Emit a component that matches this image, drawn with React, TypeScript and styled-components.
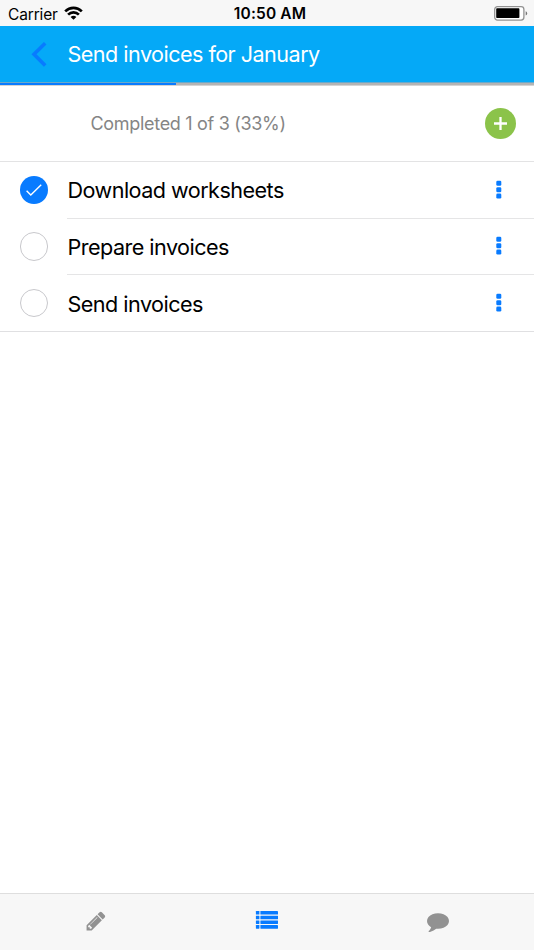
import React from "react";
import styled, { createGlobalStyle } from "styled-components";

const GlobalStyle = createGlobalStyle`
  * { box-sizing: border-box; }
  body { margin: 0; background: #fff; font-family: Inter, "Liberation Sans", sans-serif; }
  svg { display: block; }
`;

const Screen = styled.main`
  display: flex;
  flex-direction: column;
  width: 534px;
  height: 950px;
  overflow: hidden;
  background: #fff;
`;

const StatusBar = styled.div`
  display: grid;
  grid-template-columns: 1fr auto 1fr;
  align-items: center;
  height: 26px;
  padding: 2px 6px 0 8px;
  background: #f7f7f7;
  color: #000;
  font-size: 15.5px;
  line-height: 22px;
`;

const Carrier = styled.div`
  display: flex;
  align-items: center;
  gap: 6.5px;
  padding-top: 1px;
  letter-spacing: -0.15px;

  svg { margin-top: -4px; }
`;

const Clock = styled.div`
  margin: 0 -2px 0 2px;
  font-weight: 600;
  letter-spacing: 0.15px;
`;

const Battery = styled.div`
  display: flex;
  justify-content: flex-end;
  margin-top: -2px;
`;

const Header = styled.header`
  display: flex;
  align-items: center;
  height: 56px;
  background: #05a9f7;
`;

const BackButton = styled.button`
  display: flex;
  align-items: center;
  width: 67.5px;
  height: 56px;
  padding: 0 0 0 31px;
  border: 0;
  background: none;
`;

const Title = styled.h1`
  margin: 0;
  color: #fff;
  font-size: 21.6px;
  font-weight: 400;
  line-height: 30px;
  letter-spacing: -0.54px;
`;

const ProgressTrack = styled.div`
  flex: none;
  height: 4px;
  border-top: 1px solid #6ba9c9;
  border-bottom: 1px solid #d4d4d4;
  background: #b4b4b4;
`;

const ProgressFill = styled.div`
  width: 176px;
  height: 2.4px;
  background: #087bff;
`;

const Summary = styled.section`
  display: flex;
  align-items: center;
  justify-content: space-between;
  height: 76px;
  padding: 0 18px 0 90.5px;
  border-bottom: 1px solid #e3e3e4;
`;

const SummaryText = styled.span`
  color: #858585;
  font-size: 18px;
  line-height: 26px;
  letter-spacing: -0.31px;
`;

const AddButton = styled.button`
  display: grid;
  place-items: center;
  width: 31px;
  height: 31px;
  padding: 0;
  border: 0;
  border-radius: 50%;
  background: #8bc34a;
`;

const TaskList = styled.ul`
  margin: 0;
  padding: 0;
  border-bottom: 1px solid #e0e0e2;
  list-style: none;
`;

const Task = styled.li`
  display: flex;
  height: 56.5px;
  padding-left: 19.5px;

  &:last-child { height: 56px; }
`;

const Check = styled.span<{ $done: boolean }>`
  display: grid;
  place-items: center;
  flex: none;
  width: 28.5px;
  height: 28.5px;
  margin: 13.5px 19px 0 0;
  border: ${(p) => (p.$done ? "0" : "1.5px solid #c8c8cc")};
  border-radius: 50%;
  background: ${(p) => (p.$done ? "#087bff" : "#fff")};
`;

const TaskBody = styled.div<{ $divider: boolean }>`
  display: flex;
  flex: 1;
  align-items: center;
  justify-content: space-between;
  padding: 0 32px 0 0.5px;
  border-bottom: ${(p) => (p.$divider ? "1px solid #e5e5e6" : "0")};
`;

const TaskName = styled.span`
  padding-top: 1px;
  color: #000;
  font-size: 21.6px;
  line-height: 30px;
  letter-spacing: -0.54px;
`;

const TabBar = styled.nav`
  display: flex;
  justify-content: space-between;
  height: 57px;
  margin-top: auto;
  padding: 0 84px;
  border-top: 1px solid #dedede;
  background: #f7f7f7;
`;

const Tab = styled.button<{ $active?: boolean }>`
  display: flex;
  align-items: center;
  justify-content: center;
  width: 24px;
  height: ${(p) => (p.$active ? 52 : 54)}px;
  padding: 0;
  border: 0;
  background: none;
  color: ${(p) => (p.$active ? "#087bff" : "#929292")};
`;

const tasks = [
  { name: "Download worksheets", done: true },
  { name: "Prepare invoices", done: false },
  { name: "Send invoices", done: false },
];

const WifiIcon = () => (
  <svg width="19" height="14" viewBox="0 0 19 14" fill="none" stroke="#000" strokeWidth="2.7">
    <path d="M1.2 5.4C5.9.8 13.1.8 17.8 5.4" />
    <path d="M4.1 8.6c3.1-3 7.7-3 10.8 0" />
    <path d="M6.6 10.9c1.7-1.6 4.1-1.6 5.8 0L9.5 13.7z" fill="#000" stroke="none" />
  </svg>
);

const BatteryIcon = () => (
  <svg width="34" height="15" viewBox="0 0 34 15">
    <rect x=".7" y=".7" width="29.2" height="13.4" rx="2.8" fill="#fff" stroke="#929292" strokeWidth="1.3" />
    <rect x="2.2" y="2.3" width="23.2" height="9.8" rx=".8" fill="#000" />
    <path d="M31.7 5.2q1.5.6 1.5 2.2t-1.5 2.2z" fill="#777" />
  </svg>
);

const DotsIcon = () => (
  <svg width="6" height="20" viewBox="0 0 6 20" fill="#087bff">
    <rect x=".3" y=".8" width="5" height="5" rx="1.3" />
    <rect x=".3" y="7.2" width="5" height="5" rx="1.3" />
    <rect x=".3" y="13.6" width="5" height="5" rx="1.3" />
  </svg>
);

export default function App() {
  return (
    <>
      <GlobalStyle />
      <Screen>
        <StatusBar>
          <Carrier>Carrier<WifiIcon /></Carrier>
          <Clock>10:50 AM</Clock>
          <Battery><BatteryIcon /></Battery>
        </StatusBar>
        <Header>
          <BackButton aria-label="Back">
            <svg width="17" height="27" viewBox="0 0 17 27" fill="none" stroke="#087bff" strokeWidth="3.6">
              <path d="M14.2 2.2 3 13.3l11.2 11.2" />
            </svg>
          </BackButton>
          <Title>Send invoices for January</Title>
        </Header>
        <ProgressTrack><ProgressFill /></ProgressTrack>
        <Summary>
          <SummaryText>Completed 1 of 3 (33%)</SummaryText>
          <AddButton aria-label="Add">
            <svg width="15" height="15" viewBox="0 0 15 15" stroke="#fff" strokeWidth="2.3">
              <path d="M7.5 1v13M1 7.5h13" />
            </svg>
          </AddButton>
        </Summary>
        <TaskList>
          {tasks.map((task, i) => (
            <Task key={task.name}>
              <Check $done={task.done}>
                {task.done && (
                  <svg width="18" height="14" viewBox="0 0 18 14" fill="none" stroke="#fff" strokeWidth="1.4">
                    <path d="m1.6 7.8 4.2 4.3L16.2 1.8" />
                  </svg>
                )}
              </Check>
              <TaskBody $divider={i < tasks.length - 1}>
                <TaskName>{task.name}</TaskName>
                <DotsIcon />
              </TaskBody>
            </Task>
          ))}
        </TaskList>
        <TabBar>
          <Tab aria-label="Edit">
            <svg width="22" height="22" viewBox="0 0 1792 1792" fill="currentColor">
              <path d="M491 1536l91-91-235-235-91 91v107h128v128h107zM1014 608q0-22-22-22-10 0-17 7l-542 542q-7 7-7 17 0 22 22 22 10 0 17-7l542-542q7-7 7-17zM960 416l416 416-832 832h-416v-416zM1643 512q0 53-37 90l-166 166-416-416 166-165q36-38 90-38 53 0 91 38l235 234q37 39 37 91z" />
            </svg>
          </Tab>
          <Tab $active aria-label="Tasks">
            <svg width="24" height="20" viewBox="0 0 24 20" fill="currentColor">
              {[1, 5.7, 10.4, 15.1].map((y) => (
                <g key={y}>
                  <rect x=".9" y={y} width="3.5" height="3.6" rx=".4" />
                  <rect x="5.4" y={y} width="17.6" height="3.6" rx=".4" />
                </g>
              ))}
            </svg>
          </Tab>
          <Tab aria-label="Comments">
            <svg width="22" height="22" viewBox="0 0 1792 1792" fill="currentColor">
              <path d="M1792 896q0 174-120 321.5t-326 233-450 85.5q-70 0-145-8-198 175-460 242-49 14-114 22-17 2-30.5-9t-17.5-29v-1q-3-4-.5-12t2-10 4.5-9.5l6-9 7-8.5 8-9q7-8 31-34.5t34.5-38 31-39.5 32.5-51 27-59 26-76q-157-89-247.5-220t-90.5-281q0-174 120-321.5t326-233 450-85.5 450 85.5 326 233 120 321.5z" />
            </svg>
          </Tab>
        </TabBar>
      </Screen>
    </>
  );
}
